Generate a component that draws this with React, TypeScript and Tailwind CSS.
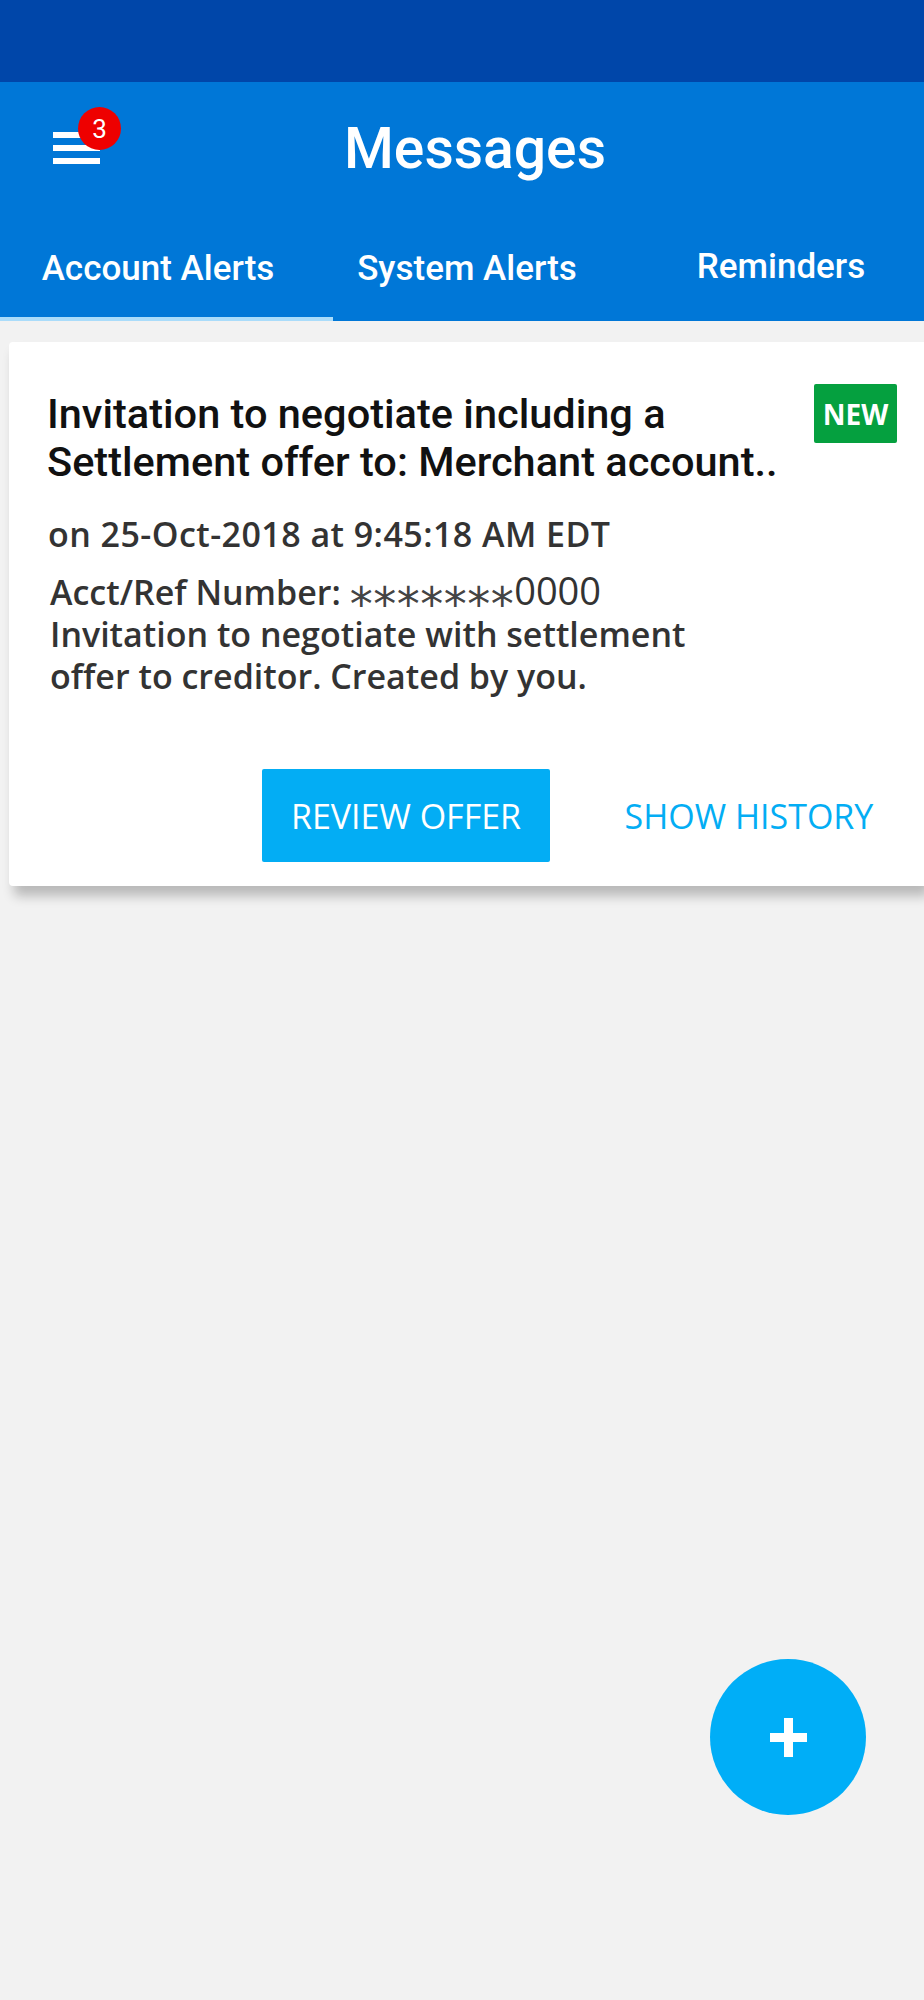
import React from "react";

const tabs = [
  { label: "Account Alerts", width: "w-[316px]", pad: "pt-[17px]" },
  { label: "System Alerts", width: "w-[302px]", pad: "pt-[17px]" },
  { label: "Reminders", width: "w-[326px]", pad: "pt-[15px]" },
];

function MenuButton() {
  return (
    <div className="relative ml-[53px] mt-[50px] flex w-[47px] flex-col gap-[7px]">
      <div className="h-[6px] w-[47px] bg-white" />
      <div className="h-[6px] w-[47px] bg-white" />
      <div className="h-[6px] w-[47px] bg-white" />
      {/* unread badge */}
      <div className="absolute left-[25px] top-[-25px] flex h-[43px] w-[43px] items-center justify-center rounded-full bg-[#ee0000] font-['Roboto',sans-serif] text-[26px] leading-none text-white">
        3
      </div>
    </div>
  );
}

function AlertCard() {
  return (
    <div className="ml-[9px] mt-[21px] rounded-l-[4px] bg-white pl-[38px] shadow-[5px_10px_12px_rgba(0,0,0,0.24)]">
      {/* Title + NEW */}
      <div className="flex items-start justify-between pr-[27px] pt-[42px]">
        <p className="mt-[6px] whitespace-nowrap font-['Roboto',sans-serif] text-[41.5px] font-medium leading-[48px] text-[#111]">
          Invitation to negotiate including a
          <br />
          Settlement offer to: Merchant account..
        </p>
        <div className="flex h-[59px] w-[83px] items-center justify-center rounded-[2px] bg-[#05a03f] font-['Open_Sans',sans-serif] text-[28px] font-bold leading-none text-white">
          NEW
        </div>
      </div>

      {/* Details */}
      <div className="ml-[1px] font-['Open_Sans',sans-serif] text-[34px] leading-[42px] text-[#333]">
        <p className="mt-[27px] font-semibold tracking-[0.45px]">
          on 25-Oct-2018 at 9:45:18 AM EDT
        </p>
        <div className="mt-[16px] ml-[2px] whitespace-nowrap">
          <p>
            <span className="font-semibold">Acct/Ref Number: </span>
            <span className="inline-block translate-y-[15px] font-['DejaVu_Sans',sans-serif] text-[46px] font-normal leading-[0] tracking-[0.5px] text-[#444]">
              *******
            </span>
            <span className="text-[38px] font-normal leading-[0]">0000</span>
          </p>
          <p className="font-semibold">
            Invitation to negotiate with settlement
            <br />
            offer to creditor. Created by you.
          </p>
        </div>
      </div>

      {/* Actions */}
      <div className="mt-[72px] flex justify-end gap-[46px] pb-[24px] pr-[22px] font-['Open_Sans',sans-serif] text-[34px] leading-none">
        <button className="flex h-[93px] w-[288px] items-center justify-center rounded-[2px] bg-[#03adf4] text-white">
          REVIEW OFFER
        </button>
        <button className="flex h-[93px] w-[306px] items-center justify-center text-[#03adf4]">
          SHOW HISTORY
        </button>
      </div>
    </div>
  );
}

export default function App() {
  return (
    <div className="relative min-h-[2000px] overflow-hidden bg-[#f2f2f2]">
      {/* Status bar */}
      <div className="h-[82px] bg-[#0046a9]" />

      {/* Header */}
      <div className="bg-[#0077d7]">
        <div className="grid h-[152px] grid-cols-[100px_1fr_100px] items-start">
          <MenuButton />
          <h1 className="mt-[38px] pl-[26px] text-center font-['Roboto',sans-serif] text-[57px] font-medium leading-[57px] text-white">
            Messages
          </h1>
          <div />
        </div>

        {/* Tabs */}
        <div className="flex h-[83px] overflow-hidden">
          {tabs.map((tab) => (
            <div
              key={tab.label}
              className={`${tab.width} ${tab.pad} shrink-0 text-center font-['Roboto',sans-serif] text-[35px] font-medium leading-[35px] text-white`}
            >
              {tab.label}
            </div>
          ))}
        </div>
        <div className="h-[4px]">
          <div className="h-[4px] w-[333px] bg-[#aadcfa]" />
        </div>
      </div>

      <AlertCard />

      {/* Floating action button */}
      <button className="absolute left-[710px] top-[1659px] flex h-[156px] w-[156px] items-center justify-center rounded-full bg-[#00aef7]">
        <svg width="37" height="39" viewBox="0 0 37 39">
          <rect x="14" y="0" width="9" height="39" fill="white" />
          <rect x="0" y="15" width="37" height="9" fill="white" />
        </svg>
      </button>
    </div>
  );
}
